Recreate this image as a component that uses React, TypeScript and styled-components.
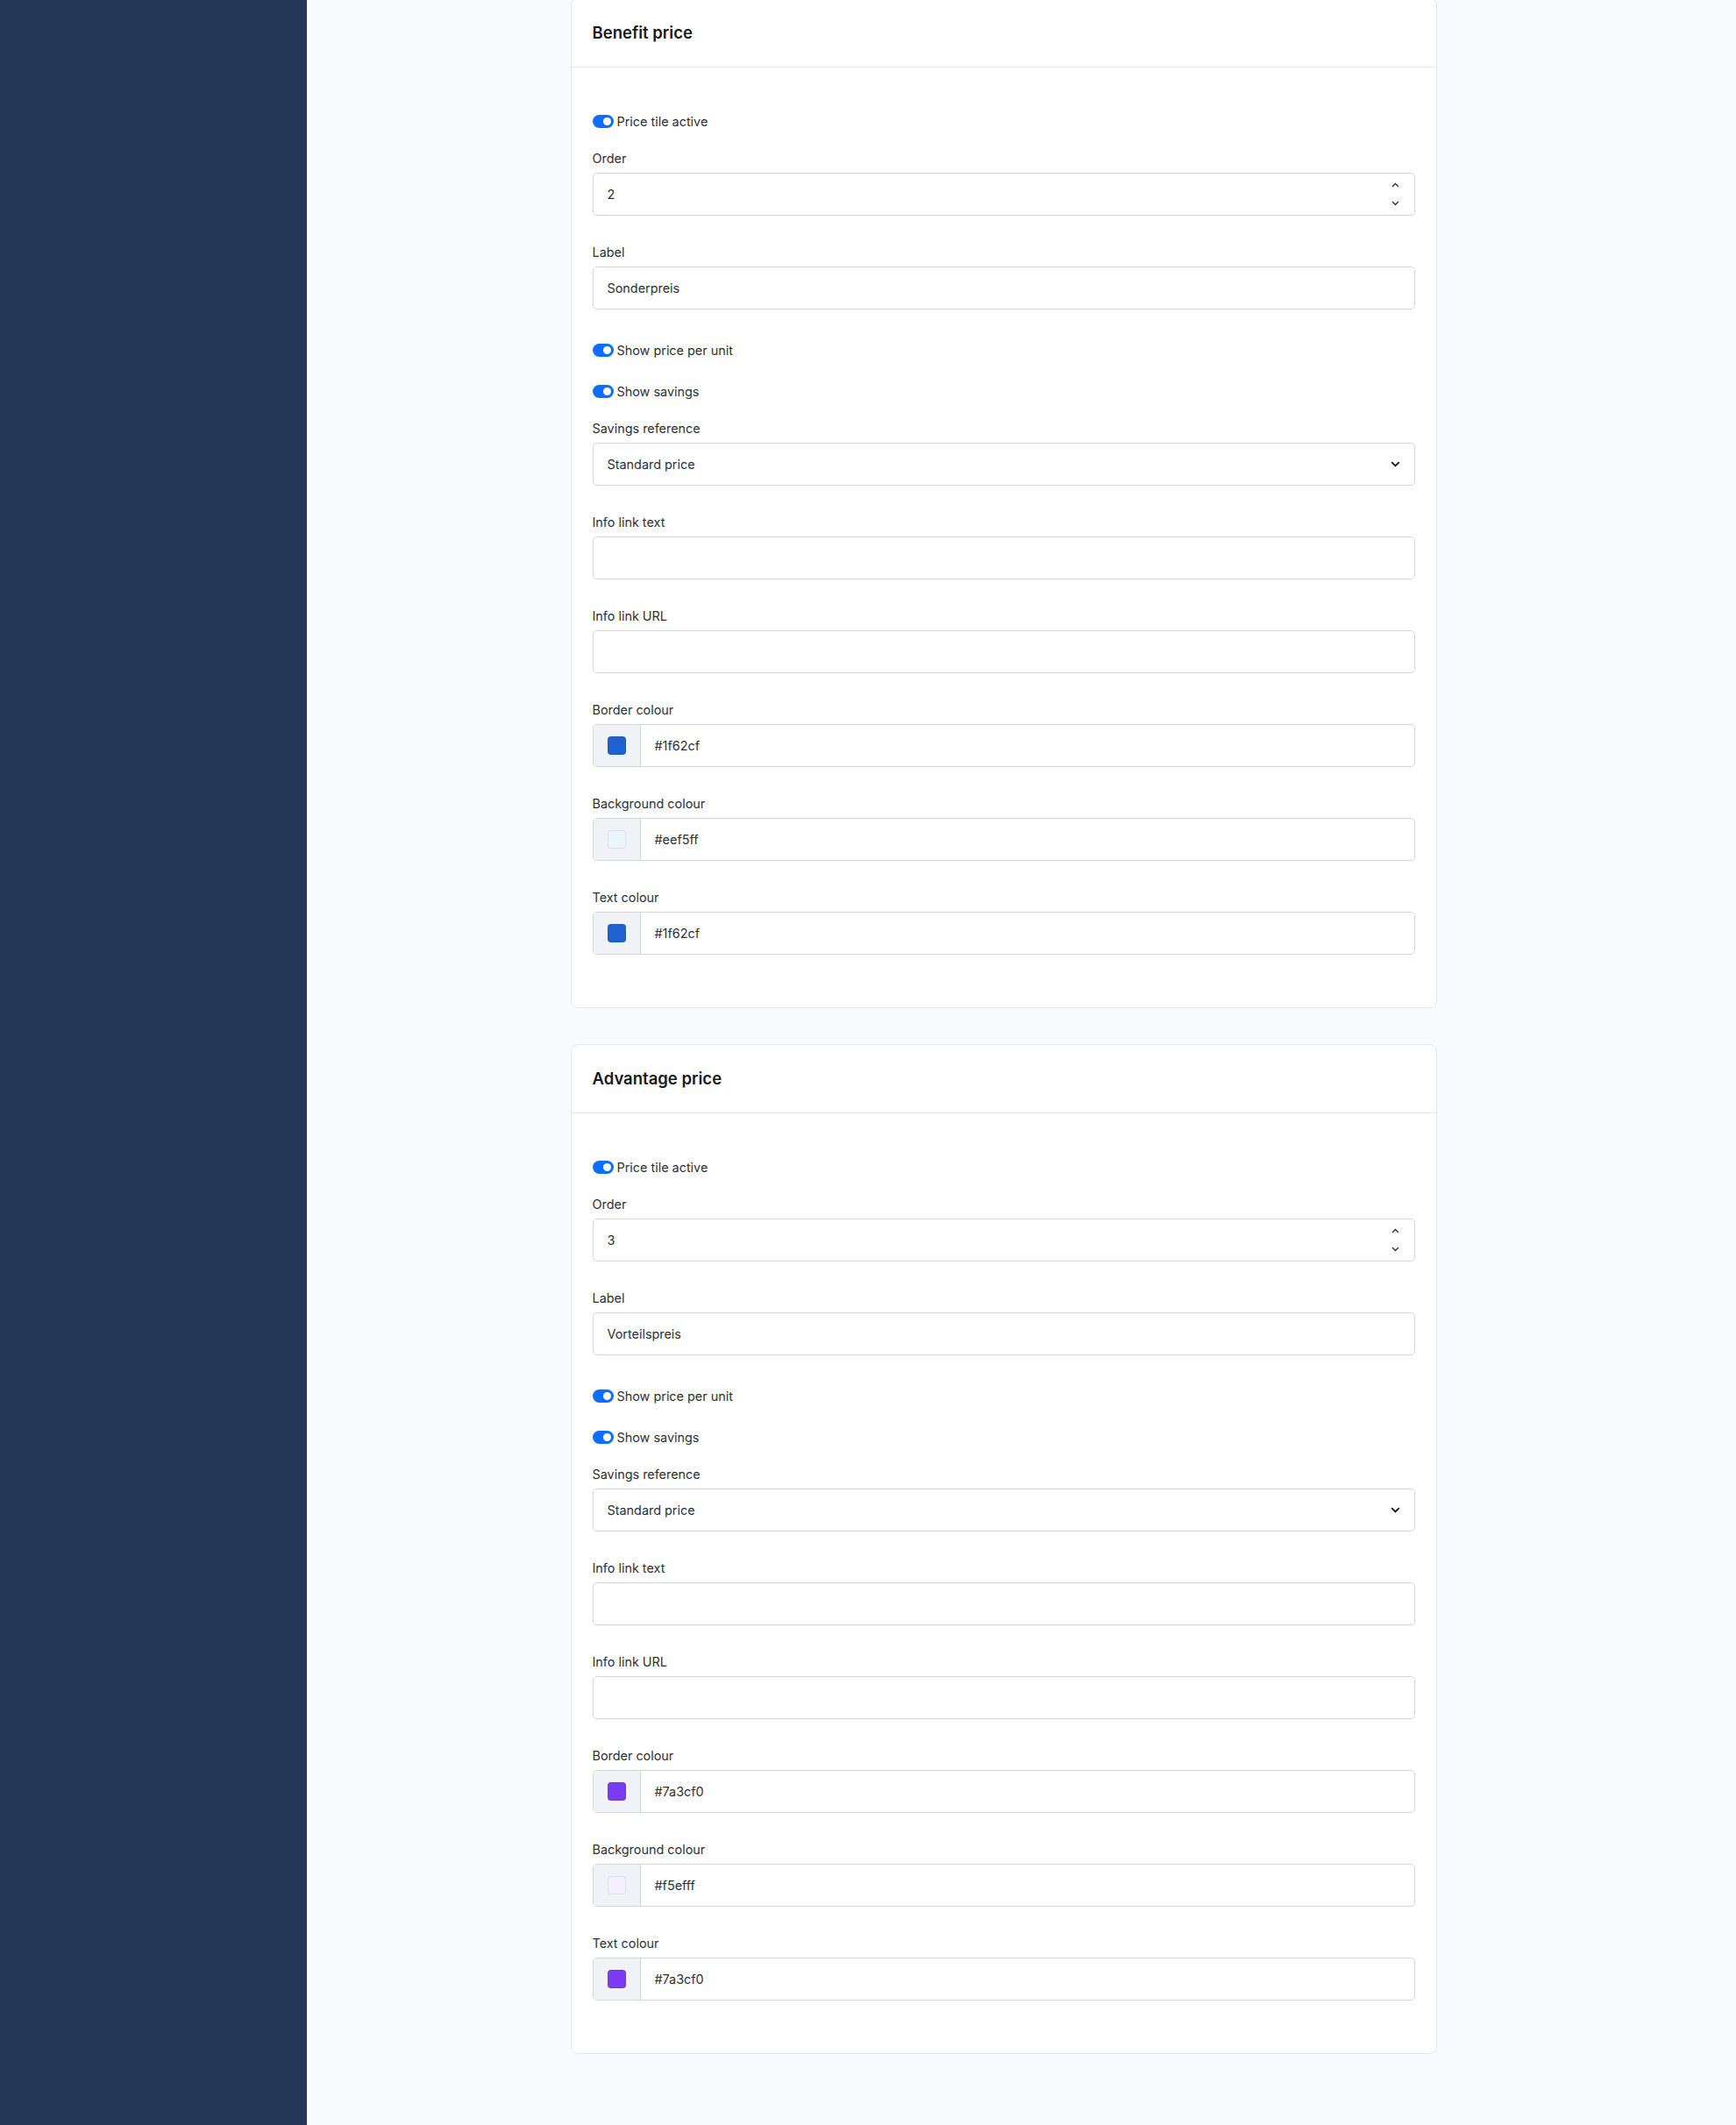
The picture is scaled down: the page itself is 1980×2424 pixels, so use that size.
import React from 'react';
import styled, { createGlobalStyle } from 'styled-components';

type PriceTile = {
  title: string,
  order: number,
  label: string,
  borderColour: string,
  backgroundColour: string,
  textColour: string,
}

const tiles: PriceTile[] = [
  {
    title: 'Benefit price',
    order: 2,
    label: 'Sonderpreis',
    borderColour: '#1f62cf',
    backgroundColour: '#eef5ff',
    textColour: '#1f62cf',
  },
  {
    title: 'Advantage price',
    order: 3,
    label: 'Vorteilspreis',
    borderColour: '#7a3cf0',
    backgroundColour: '#f5efff',
    textColour: '#7a3cf0',
  },
];

const GlobalStyle = createGlobalStyle`
  html, body {
    margin: 0;
    padding: 0;
    background: #f8fafd;
  }
  body {
    font-family: Inter, "Noto Sans", "Liberation Sans", sans-serif;
    color: #2c2f35;
  }
  * {
    box-sizing: border-box;
  }
`;

const Layout = styled.div`
  display: flex;
  min-height: 2424px;
  overflow: hidden;
`;

const Sidebar = styled.aside`
  flex: 0 0 350px;
  background-color: #243757;
`;

const Main = styled.main`
  flex: 1;
  background-color: #f8fafd;
  padding: 0 41px 0 0;
`;

const Content = styled.div`
  max-width: 988px;
  margin: -2px auto 0;
`;

const Card = styled.section`
  background-color: #ffffff;
  border: 1px solid #e4e7ec;
  border-radius: 8px;
  margin-bottom: 41px;
`;

const CardHeader = styled.header`
  padding: 26px 24px;
  border-bottom: 1px solid #e4e7ec;
`;

const CardTitle = styled.h2`
  margin: 0;
  font-size: 18.5px;
  line-height: 25px;
  font-weight: 600;
  color: #16191f;
`;

const CardBody = styled.div`
  padding: 47px 24px 28px;
`;

const SwitchRow = styled.label`
  display: flex;
  align-items: center;
  gap: 4px;
  height: 28px;
  margin-bottom: 19px;
  font-size: 14.4px;
  color: #2c2f35;
`;

const SwitchTrack = styled.span<{ on: boolean }>`
  position: relative;
  display: inline-block;
  width: 24px;
  height: 15px;
  border-radius: 8px;
  background-color: ${(props: { on: boolean }) => props.on ? '#0d6efd' : '#d0d4da'};
  &::after {
    content: '';
    position: absolute;
    top: 3px;
    left: ${(props: { on: boolean }) => props.on ? '12px' : '3px'};
    width: 9px;
    height: 9px;
    border-radius: 50%;
    background-color: #ffffff;
  }
`;

const FormGroup = styled.div`
  margin-bottom: 32px;
`;

const FieldLabel = styled.div`
  font-size: 14.4px;
  line-height: 20px;
  color: #2c2f35;
  margin-bottom: 6px;
`;

const InputShell = styled.div`
  display: flex;
  align-items: stretch;
  height: 49px;
  border: 1px solid #d3d6dc;
  border-radius: 5px;
  background-color: #ffffff;
  overflow: hidden;
`;

const TextInput = styled.input`
  flex: 1;
  min-width: 0;
  border: none;
  outline: none;
  background: transparent;
  padding: 0 16px;
  font-family: Inter, "Noto Sans", "Liberation Sans", sans-serif;
  font-size: 14.4px;
  color: #2c2f35;
`;

const Spinner = styled.div`
  display: flex;
  flex-direction: column;
  justify-content: center;
  gap: 15px;
  padding-right: 17px;
`;

const SelectChevron = styled.div`
  display: flex;
  align-items: center;
  padding-right: 16px;
`;

const SwatchAddon = styled.div`
  flex: 0 0 54px;
  display: flex;
  align-items: center;
  justify-content: center;
  background-color: #f1f2f6;
  border-right: 1px solid #d3d6dc;
`;

const Swatch = styled.span<{ colour: string }>`
  width: 21px;
  height: 21px;
  border-radius: 4px;
  background-color: ${(props: { colour: string }) => props.colour};
  border: 1px solid rgba(0, 0, 0, 0.08);
`;

const Toggle: React.FC<{ label: string }> = ({ label }) => (
  <SwitchRow>
    <SwitchTrack on={true} />
    <span>{label}</span>
  </SwitchRow>
);

const TextField: React.FC<{ label: string, value?: string }> = ({ label, value }) => (
  <FormGroup>
    <FieldLabel>{label}</FieldLabel>
    <InputShell>
      <TextInput readOnly value={value || ''} />
    </InputShell>
  </FormGroup>
);

const NumberField: React.FC<{ label: string, value: number }> = ({ label, value }) => (
  <FormGroup>
    <FieldLabel>{label}</FieldLabel>
    <InputShell>
      <TextInput readOnly value={String(value)} />
      <Spinner>
        <svg width="9" height="6" viewBox="0 0 9 6" fill="none">
          <path d="M1 5L4.5 1.5L8 5" stroke="#2c2f35" strokeWidth="1.3" />
        </svg>
        <svg width="9" height="6" viewBox="0 0 9 6" fill="none">
          <path d="M1 1L4.5 4.5L8 1" stroke="#2c2f35" strokeWidth="1.3" />
        </svg>
      </Spinner>
    </InputShell>
  </FormGroup>
);

const SelectField: React.FC<{ label: string, value: string }> = ({ label, value }) => (
  <FormGroup>
    <FieldLabel>{label}</FieldLabel>
    <InputShell>
      <TextInput readOnly value={value} />
      <SelectChevron>
        <svg width="11" height="7" viewBox="0 0 11 7" fill="none">
          <path d="M1.2 1.2L5.5 5.5L9.8 1.2" stroke="#16191f" strokeWidth="1.9" />
        </svg>
      </SelectChevron>
    </InputShell>
  </FormGroup>
);

const ColourField: React.FC<{ label: string, value: string }> = ({ label, value }) => (
  <FormGroup>
    <FieldLabel>{label}</FieldLabel>
    <InputShell>
      <SwatchAddon>
        <Swatch colour={value} />
      </SwatchAddon>
      <TextInput readOnly value={value} />
    </InputShell>
  </FormGroup>
);

const TileCard: React.FC<{ tile: PriceTile }> = ({ tile }) => (
  <Card>
    <CardHeader>
      <CardTitle>{tile.title}</CardTitle>
    </CardHeader>
    <CardBody>
      <Toggle label="Price tile active" />
      <NumberField label="Order" value={tile.order} />
      <TextField label="Label" value={tile.label} />
      <Toggle label="Show price per unit" />
      <Toggle label="Show savings" />
      <SelectField label="Savings reference" value="Standard price" />
      <TextField label="Info link text" />
      <TextField label="Info link URL" />
      <ColourField label="Border colour" value={tile.borderColour} />
      <ColourField label="Background colour" value={tile.backgroundColour} />
      <ColourField label="Text colour" value={tile.textColour} />
    </CardBody>
  </Card>
);

const App: React.FC = () => (
  <>
    <GlobalStyle />
    <Layout>
      <Sidebar />
      <Main>
        <Content>
          {tiles.map((tile) => (
            <TileCard key={tile.title} tile={tile} />
          ))}
        </Content>
      </Main>
    </Layout>
  </>
);

export default App;
